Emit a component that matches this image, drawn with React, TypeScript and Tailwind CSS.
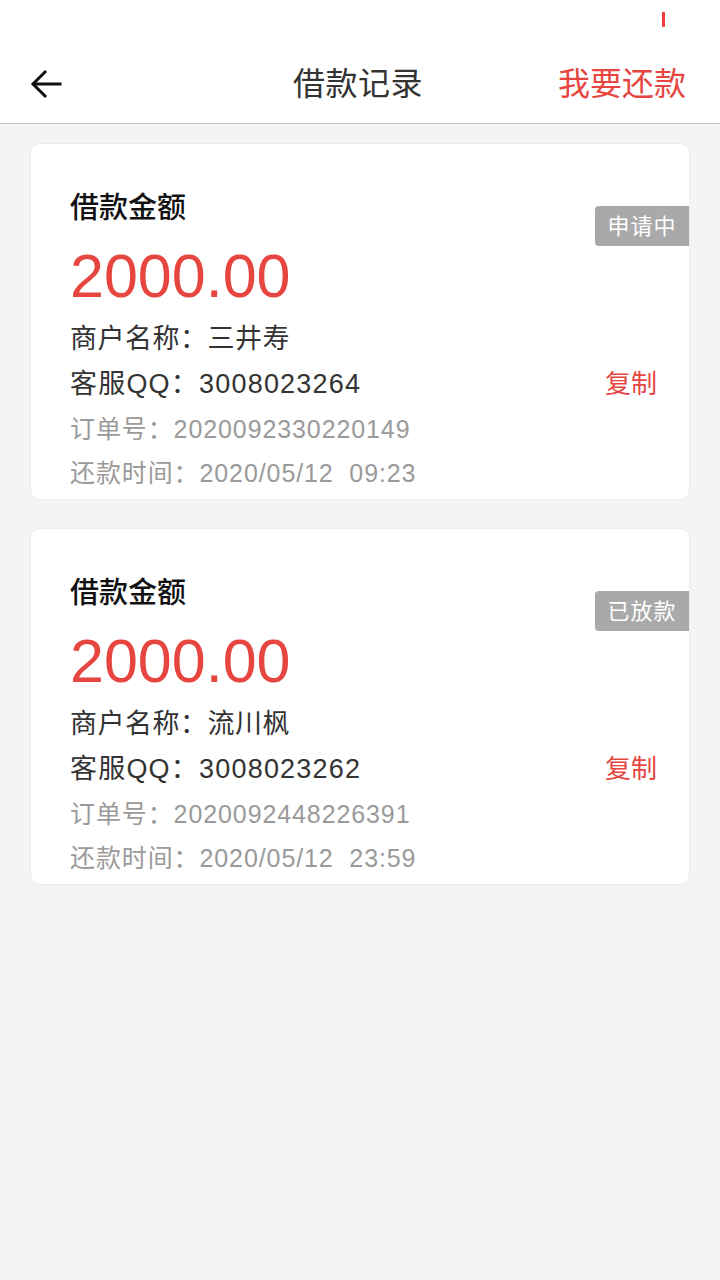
import { useState } from 'react'

interface LoanRecord {
  amount: string
  merchant: string
  qq: string
  orderNo: string
  repayTime: string
  status: string
}

const records: LoanRecord[] = [
  {
    amount: '2000.00',
    merchant: '三井寿',
    qq: '3008023264',
    orderNo: '2020092330220149',
    repayTime: '2020/05/12\u00a0\u00a009:23',
    status: '申请中',
  },
  {
    amount: '2000.00',
    merchant: '流川枫',
    qq: '3008023262',
    orderNo: '2020092448226391',
    repayTime: '2020/05/12\u00a0\u00a023:59',
    status: '已放款',
  },
]

const font = {
  fontFamily: '"Liberation Sans", "Noto Sans CJK SC", sans-serif',
}

function BackArrow() {
  return (
    <svg viewBox="0 0 32 32" className="h-[32px] w-[32px]" fill="none" stroke="#111" strokeWidth="3" strokeLinecap="square">
      <path d="M30 16H4" />
      <path d="M15 4L3 16l12 12" />
    </svg>
  )
}

function RecordCard({ data }: { data: LoanRecord }) {
  const [copied, setCopied] = useState(false)

  return (
    <article className="relative rounded-[10px] border border-[#ececec] bg-white pb-[3px] pl-[39px] pr-[32px] pt-[44px]">
      <span className="absolute right-0 top-[62px] flex h-[40px] w-[94px] items-center justify-center rounded-l-[4px] bg-[#a9a9a9] text-[22px] tracking-[1px] text-white">
        {data.status}
      </span>
      <h3 className="text-[29px] font-medium leading-[40px] text-[#111]">借款金额</h3>
      <p className="mt-[12px] text-[61px] leading-[72px] text-[#e6463f]">{data.amount}</p>
      <div className="mt-[5px] flex h-[45px] items-center text-[27px] tracking-[0.5px] text-[#333]">
        商户名称：{data.merchant}
      </div>
      <div className="flex h-[45px] items-center justify-between text-[27px] text-[#333]">
        <span className="tracking-[1.2px]">客服QQ：{data.qq}</span>
        <button
          type="button"
          onClick={() => setCopied(true)}
          className="text-[26px] text-[#e6463f]"
        >
          {copied ? '已复制' : '复制'}
        </button>
      </div>
      <div className="flex h-[45px] items-center text-[25px] tracking-[0.9px] text-[#9a9a9a]">
        订单号：{data.orderNo}
      </div>
      <div className="flex h-[44px] items-center text-[25px] tracking-[0.9px] text-[#9a9a9a]">
        还款时间：{data.repayTime}
      </div>
    </article>
  )
}

export default function App() {
  return (
    <div className="min-h-[1280px] w-[720px] bg-[#f4f4f4]" style={font}>
      <div className="bg-white">
        <div className="flex h-[44px] justify-end pr-[55px] pt-[12px]">
          <span className="h-[15px] w-[3px] rounded-[1px] bg-[#f03a3a]" />
        </div>
        <header className="flex h-[80px] items-center justify-between border-b border-[#c4c4c4] pl-[30px] pr-[34px]">
          <button type="button" className="flex w-[129px] items-center">
            <BackArrow />
          </button>
          <h1 className="text-[32px] leading-none tracking-[0.5px] text-[#333]">借款记录</h1>
          <button type="button" className="w-[129px] text-right text-[32px] leading-none text-[#e6463f]">
            我要还款
          </button>
        </header>
      </div>
      <main className="flex flex-col gap-[28px] pl-[30px] pr-[30px] pt-[19px]">
        {records.map((r) => (
          <RecordCard key={r.orderNo} data={r} />
        ))}
      </main>
    </div>
  )
}
